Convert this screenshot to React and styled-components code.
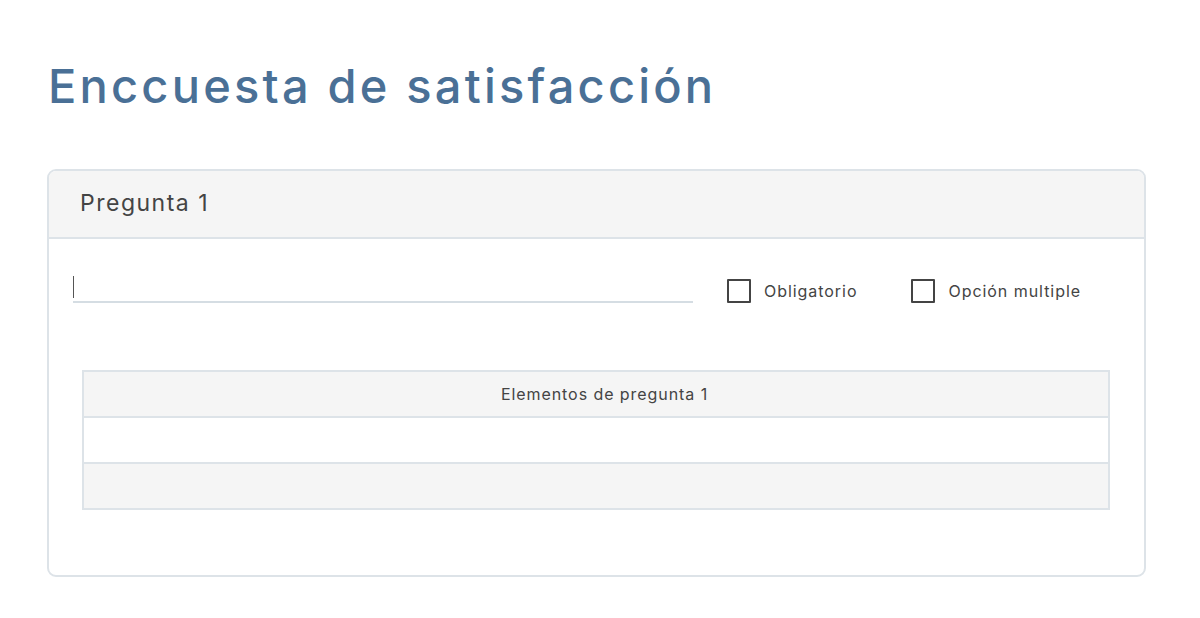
import React from "react";
import styled, { createGlobalStyle } from "styled-components";

const Global = createGlobalStyle`
  html, body { margin: 0; padding: 0; background: #ffffff; }
  body { font-family: Inter, "Noto Sans", sans-serif; color: #444; }
  * { box-sizing: border-box; }
`;

const Page = styled.div`
  padding: 48px 54px 40px 47px;
`;

const Title = styled.h1`
  margin: 0 0 45px 1px;
  font-size: 47px;
  line-height: 76px;
  font-weight: 500;
  letter-spacing: 3.2px;
  color: #4a7096;
`;

const Card = styled.section`
  border: 2px solid #dde3e8;
  border-radius: 9px;
  overflow: hidden;
  background: #fff;
`;

const CardHeader = styled.header`
  background: #f5f5f5;
  border-bottom: 2px solid #dde3e8;
  height: 68px;
  display: flex;
  align-items: center;
  padding: 0 31px 2px;
  font-size: 23px;
  font-weight: 400;
  color: #444;
  letter-spacing: 1.5px;
`;

const CardBody = styled.div`
  padding: 30px 34px 65px 24px;
`;

const Controls = styled.div`
  display: flex;
  align-items: flex-end;
`;

const TextInput = styled.div`
  width: 620px;
  height: 34px;
  border-bottom: 2px solid #d5dde3;
  display: flex;
  align-items: center;
  padding-top: 4px;
`;

const Caret = styled.span`
  width: 1px;
  height: 22px;
  background: #555;
`;

const Check = styled.label`
  display: flex;
  align-items: center;
  gap: 13px;
  height: 24px;
  margin-left: ${(p) => p.$gap}px;
  font-size: 16px;
  color: #444;
  letter-spacing: 0.95px;
`;

const Box = styled.span`
  width: 24px;
  height: 24px;
  border: 2px solid #444;
  border-radius: 1px;
  display: inline-block;
`;

const Table = styled.div`
  margin: 67px 0 0 9px;
  border: 2px solid #dde3e8;
  border-bottom: 0;
`;

const Row = styled.div`
  height: 46px;
  display: flex;
  align-items: center;
  justify-content: center;
  padding-left: 17px;
  background: ${(p) => (p.$alt ? "#f5f5f5" : "#ffffff")};
  border-bottom: 2px solid #dde3e8;
  font-size: 16px;
  color: #444;
  letter-spacing: 0.93px;
`;

export default function App() {
  return (
    <>
      <Global />
      <Page>
        <Title>Enccuesta de satisfacción</Title>
        <Card>
          <CardHeader>Pregunta 1</CardHeader>
          <CardBody>
            <Controls>
              <TextInput>
                <Caret />
              </TextInput>
              <Check $gap={34}>
                <Box />
                Obligatorio
              </Check>
              <Check $gap={54}>
                <Box />
                Opción multiple
              </Check>
            </Controls>
            <Table>
              <Row $alt>Elementos de pregunta 1</Row>
              <Row />
              <Row $alt />
            </Table>
          </CardBody>
        </Card>
      </Page>
    </>
  );
}
